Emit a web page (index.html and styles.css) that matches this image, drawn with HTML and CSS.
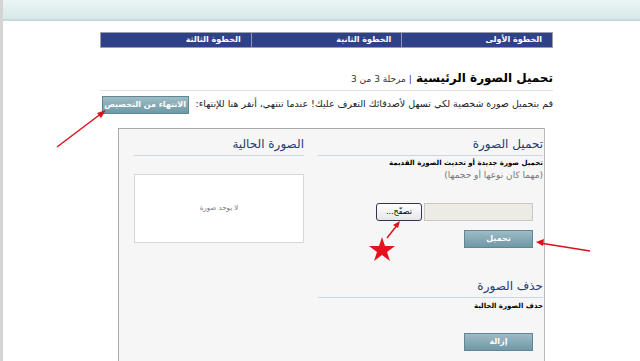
FILE: index.html
```html
<!DOCTYPE html>
<html dir="rtl" lang="ar">
  <head>
    <meta http-equiv="Content-Type" content="text/html; charset=UTF-8">
    <title>تحميل الصورة الرئيسية</title>
    <link rel="stylesheet" href="styles.css">
  </head>
  <body>
    <div class="topbar"></div>

    <div class="page">
      <div class="steps">
        <div class="step">الخطوة الأولى</div>
        <div class="step">الخطوة الثانية</div>
        <div class="step">الخطوة الثالثة</div>
      </div>

      <h1 class="title">تحميل الصورة الرئيسية <span class="stage">| مرحلة 3 من 3</span></h1>

      <p class="intro">
        قم بتحميل صورة شخصية لكي تسهل لأصدقائك التعرف عليك! عندما تنتهي، أنقر هنا للإنتهاء:
        <span class="btn btn-finish">الانتهاء من التخصيص</span>
      </p>

      <div class="box">
        <div class="col col-upload">
          <h3 class="col-title">تحميل الصورة</h3>
          <p class="note">تحميل صورة جديدة أو تحديث الصورة القديمة</p>
          <p class="hint">(مهما كان نوعها أو حجمها)</p>

          <div class="file">
            <span class="file-field"></span>
            <span class="file-btn">تصفّح...</span>
          </div>
          <div class="btn-row"><span class="btn btn-act">تحميل</span></div>

          <h3 class="col-title col-title-del">حذف الصورة</h3>
          <p class="note note-del">حذف الصورة الحالية</p>
          <div class="btn-row btn-row-del"><span class="btn btn-act">إزالة</span></div>
        </div>

        <div class="col col-current">
          <h3 class="col-title">الصورة الحالية</h3>
          <div class="photo">لا يوجد صورة</div>
        </div>
      </div>
    </div>

    <svg class="marks" width="640" height="361" viewBox="0 0 640 361">
      <line x1="57" y1="147" x2="102" y2="113" stroke="#e0101a" stroke-width="1.5"/>
      <polygon points="106,110 97,113 101,118" fill="#e0101a"/>
      <line x1="590" y1="251" x2="540" y2="243" stroke="#e0101a" stroke-width="1.5"/>
      <polygon points="536,242 544,239 543,246" fill="#e0101a"/>
      <line x1="387" y1="238" x2="398" y2="224" stroke="#e0101a" stroke-width="1.5"/>
      <polygon points="400,221 393,225 398,228" fill="#e0101a"/>
      <polygon points="382,237 385,246 395,246 387,252 390,261 382,255 374,261 377,252 369,246 379,246" fill="#e8101a"/>
    </svg>
  </body>
</html>
```

FILE: styles.css
```css
body {
  margin: 0;
  height: 361px;
  border-left: 3px solid #d4d4d4;
  background: #fff;
  font-family: "DejaVu Sans", sans-serif;
  color: #000;
  overflow: hidden;
}

.topbar {
  height: 19px;
  background: linear-gradient(#edf5f5, #d8e8e8);
  border-bottom: 2px solid #c6dada;
}

.page {
  width: 453px;
  margin: 11px 87px 0 0;
}

.steps {
  display: flex;
  height: 14px;
  background: #2f4187;
  border: 1px solid #9a9eb0;
}

.step {
  flex: 1;
  color: #fff;
  font-size: 8px;
  font-weight: bold;
  line-height: 14px;
  padding-right: 10px;
  border-left: 1px solid #8b93b8;
}

.step:last-child {
  border-left: none;
}

.title {
  margin: 23px 0 0;
  padding-bottom: 5px;
  font-size: 12px;
  font-weight: bold;
  border-bottom: 1px solid #e2e2e2;
}

.stage {
  font-size: 9px;
  font-weight: normal;
  color: #333;
}

.intro {
  margin: 4px 0 0;
  font-size: 9.5px;
  color: #222;
  line-height: 18px;
  white-space: nowrap;
}

.btn {
  display: inline-block;
  color: #fff;
  font-weight: bold;
  font-size: 8px;
  text-align: center;
  background: linear-gradient(#9dbcc6, #6f98a6);
  border: 1px solid #5f8795;
  vertical-align: middle;
}

.btn-finish {
  width: 85px;
  height: 16px;
  line-height: 16px;
  margin-right: 4px;
}

.box {
  display: flex;
  margin: 14px 8px 0 18px;
  height: 240px;
  background: #f6f6f6;
  border: 1px solid #a9a9a9;
  border-right-color: #bbb;
}

.col-upload {
  width: 225px;
  margin-right: 1px;
}

.col-current {
  width: 170px;
  margin-right: 14px;
}

.col-title {
  margin: 8px 0 0;
  padding-bottom: 4px;
  font-size: 12px;
  font-weight: normal;
  color: #1f3a78;
  border-bottom: 1px solid #cdd5e3;
}

.note {
  margin: 3px 0 0;
  font-size: 7px;
  font-weight: bold;
}

.note-del {
  margin-top: 4px;
}

.hint {
  margin: 3px 0 0;
  font-size: 9px;
  color: #777;
}

.file {
  display: flex;
  align-items: center;
  margin: 23px 10px 0 0;
}

.file-field {
  width: 107px;
  height: 16px;
  background: #ecebe5;
  border: 1px solid #c8c8c0;
}

.file-btn {
  width: 44px;
  height: 16px;
  margin-right: 2px;
  font-size: 8px;
  line-height: 16px;
  text-align: center;
  background: linear-gradient(#fff, #e6e6e6);
  border: 1px solid #335;
  border-radius: 3px;
}

.btn-row {
  margin: 8px 10px 0 0;
}

.btn-act {
  width: 67px;
  height: 16px;
  line-height: 16px;
}

.col-title-del {
  margin-top: 31px;
}

.btn-row-del {
  margin-top: 21px;
}

.photo {
  margin-top: 18px;
  height: 67px;
  background: #fff;
  border: 1px solid #d7d7d7;
  font-size: 7px;
  color: #777;
  text-align: center;
  line-height: 67px;
}

.marks {
  position: absolute;
  left: 0;
  top: 0;
  pointer-events: none;
}
```
